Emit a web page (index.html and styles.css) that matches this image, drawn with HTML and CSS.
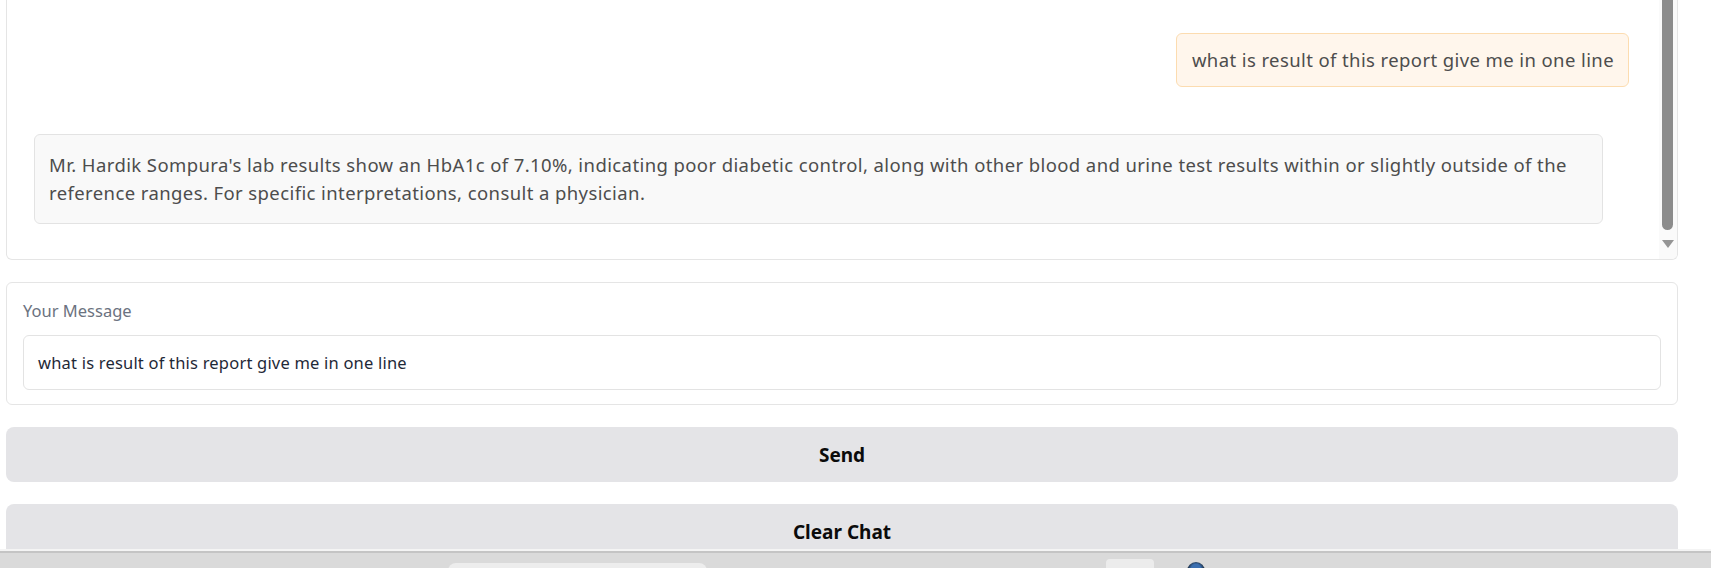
FILE: index.html
```html
<!DOCTYPE html>
<html lang="en">
<head>
<meta charset="utf-8">
<title>Chat</title>
<link rel="stylesheet" href="styles.css">
</head>
<body>
<div class="page">
  <div class="chatbox">
    <div class="messages">
      <div class="row row-user">
        <div class="bubble bubble-user">what is result of this report give me in one line</div>
      </div>
      <div class="row row-bot">
        <div class="bubble bubble-bot">Mr. Hardik Sompura's lab results show an HbA1c of 7.10%, indicating poor diabetic control, along with other blood and urine test results within or slightly outside of the reference ranges. For specific interpretations, consult a physician.</div>
      </div>
    </div>
    <div class="scrollbar">
      <div class="thumb"></div>
      <div class="arrow"></div>
    </div>
  </div>
  <div class="panel">
    <div class="label">Your Message</div>
    <div class="input">what is result of this report give me in one line</div>
  </div>
  <button class="btn">Send</button>
  <button class="btn">Clear Chat</button>
</div>
<div class="taskbar">
  <div class="tb-tab"></div>
  <div class="tb-square"></div>
  <div class="tb-circle"></div>
</div>
</body>
</html>
```
FILE: styles.css
```css
* { box-sizing: border-box; }
html, body { margin: 0; padding: 0; background: #ffffff; }
body { font-family: "Noto Sans", "Lato", sans-serif; overflow: hidden; height: 568px; }

.page {
  display: flex;
  flex-direction: column;
  gap: 22px;
  margin-left: 6px;
  width: 1672px;
}

.chatbox {
  display: flex;
  height: 260px;
  border: 1px solid #e5e5e5;
  border-top: none;
  border-radius: 0 0 6px 6px;
  overflow: hidden;
}

.messages {
  flex: 1;
  display: flex;
  flex-direction: column;
  gap: 47px;
  padding: 33px 30px 0 27px;
}

.row { display: flex; }
.row-user { justify-content: flex-end; }
.row-bot { padding-right: 26px; }

.bubble {
  font-size: 18.5px;
  letter-spacing: 0.4px;
  line-height: 28px;
  color: #4d4d4d;
  border-radius: 6px;
}

.bubble-user {
  background: #fff6ec;
  border: 1px solid #fcdcb0;
  padding: 12px 14px 12px 15px;
}

.bubble-bot {
  width: 100%;
  background: #f9f9f9;
  border: 1px solid #e3e3e3;
  padding: 16px 14px;
}

.scrollbar {
  width: 18px;
  background: #fafafa;
  display: flex;
  flex-direction: column;
  align-items: center;
}

.thumb {
  width: 11px;
  height: 230px;
  background: #8c8c8c;
  border-radius: 0 0 6px 6px;
  margin-left: -1px;
}

.arrow {
  margin-top: 10px;
  margin-left: -1px;
  width: 0;
  height: 0;
  border-left: 6px solid transparent;
  border-right: 6px solid transparent;
  border-top: 8px solid #959595;
}

.panel {
  border: 1px solid #e5e5e5;
  border-radius: 6px;
  padding: 17px 16px 14px 16px;
  display: flex;
  flex-direction: column;
}

.label {
  font-size: 16.5px;
  line-height: 22px;
  color: #6b7280;
  margin-bottom: 13px;
}

.input {
  height: 55px;
  border: 1px solid #e3e3e3;
  border-radius: 6px;
  padding: 0 14px;
  display: flex;
  align-items: center;
  font-size: 16.5px;
  letter-spacing: 0.2px;
  color: #1f2937;
}

.btn {
  height: 55px;
  border: none;
  border-radius: 8px;
  background: #e4e4e7;
  font-family: "Noto Sans", "Lato", sans-serif;
  font-weight: 700;
  font-size: 19px;
  color: #0b0b0b;
  padding: 0;
}

.taskbar {
  position: fixed;
  left: 0;
  right: 0;
  bottom: 0;
  height: 19px;
  background: #dadada;
  border-top: 2px solid #f4f4f4;
  box-shadow: inset 0 2px 0 #c4c4c4;
}

.tb-tab {
  position: absolute;
  left: 448px;
  top: 12px;
  width: 259px;
  height: 10px;
  background: #ededed;
  border-radius: 8px 8px 0 0;
}

.tb-square {
  position: absolute;
  left: 1106px;
  top: 8px;
  width: 48px;
  height: 12px;
  background: #ececec;
  border-radius: 4px 4px 0 0;
}

.tb-circle {
  position: absolute;
  left: 1187px;
  top: 11px;
  width: 18px;
  height: 18px;
  border-radius: 50%;
  background: radial-gradient(circle at 50% 40%, #3b6fb0 0 35%, #1c2a3a 60%);
}
```
